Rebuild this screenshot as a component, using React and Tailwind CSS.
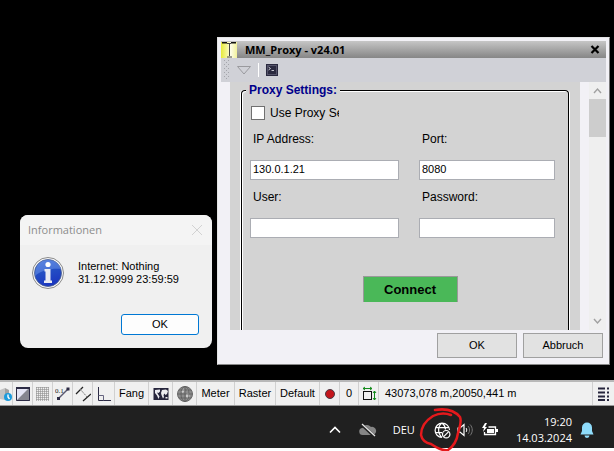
import React, { useState } from "react";

const InfoIcon = () => (
  <svg width="34" height="34" viewBox="0 0 34 34" className="shrink-0">
    <defs>
      <linearGradient id="infoBlue" x1="0" y1="0" x2="0.3" y2="1">
        <stop offset="0" stopColor="#4a76dc" />
        <stop offset="0.5" stopColor="#2450c4" />
        <stop offset="1" stopColor="#1c38c0" />
      </linearGradient>
    </defs>
    <circle cx="17" cy="17" r="15.500" fill="#f8f8f8" stroke="#8a8a8a" />
    <circle cx="17" cy="17" r="13.500" fill="url(#infoBlue)" stroke="#4a5f8f" strokeWidth="0.8" />
    <path d="M4 20C4 8 10 4 17 4s12 4 13 9C22 12 10 14 4 20Z" fill="#6f97ea" opacity="0.5" />
    <circle cx="17" cy="8.5" r="2.6" fill="#fff" />
    <path d="M13.500 13h6v11.500h1.500V27h-8v-2.500h1.500V15.500h-1Z" fill="#e9ebf2" />
  </svg>
);

const AppIcon = () => (
  <svg width="16" height="16" viewBox="0 0 16 16" className="shrink-0">
    <defs>
      <linearGradient id="appYellow" x1="0" x2="1">
        <stop offset="0" stopColor="#e6ea3a" />
        <stop offset="0.4" stopColor="#f6f7a0" />
        <stop offset="0.6" stopColor="#fdfdea" />
        <stop offset="1" stopColor="#f2f29a" />
      </linearGradient>
    </defs>
    <rect width="16" height="16" fill="url(#appYellow)" />
    <path d="M1 .8h5M10 .8h5" stroke="#111" strokeWidth="1.600" />
    <path d="M6 1.500h4M8.500 1v13M6 15h5" stroke="#444" fill="none" />
  </svg>
);

const StatusIcon = ({ children, size = 16 }) => (
  <svg width={size} height="16" viewBox={`0 0 ${size} 16`} fill="none">
    {children}
  </svg>
);

const PageIcon = () => (
  <StatusIcon size={12}>
    <path d="M0 4l5-2v12l-5-1Z" fill="#c4c4c4" />
    <path d="M5 2l4 2v9l-4 1Z" fill="#a2a2a2" />
    <circle cx="8" cy="11" r="4" fill="#1c9bdc" />
    <path d="M8 8.5V11l1.500 2" stroke="#fff" strokeWidth="1.400" />
  </StatusIcon>
);

const ContrastIcon = () => (
  <StatusIcon>
    <rect x="1.5" y="1.5" width="13" height="13" fill="#e4e4f4" />
    <path d="M15 1v14H1Z" fill="#85858f" />
    <path d="M1 2h14" stroke="#2c2b45" strokeWidth="2" />
    <path d="M1.500 1v13.500h13V1" stroke="#2c2b45" />
  </StatusIcon>
);

const GridIcon = () => (
  <StatusIcon>
    <path
      d="M1.5 1v14M3.5 1v14M5.5 1v14M7.500 1v14M9.500 1v14M11.500 1v14M13.500 1v14M1 1.5h13M1 3.500h13M1 5.500h13M1 7.500h13M1 9.500h13M1 11.500h13M1 13.500h13"
      stroke="#8f8f8f"
      strokeWidth="0.600"
    />
  </StatusIcon>
);

const SnapIcon = () => (
  <StatusIcon>
    <path d="M3 13L13 3" stroke="#5a5970" strokeWidth="1.4" />
    <path d="M2 11h3v3H2ZM11.500 1.500h3v3h-3Z" fill="#2c2b45" />
    <text x="0" y="7" fontSize="7" fill="#222" fontFamily="Liberation Serif">0.1</text>
  </StatusIcon>
);

const ParallelIcon = () => (
  <StatusIcon>
    <path d="M1 8l7-7M8 15l8-7" stroke="#222" strokeWidth="1.3" />
    <path d="M5 3l8 9" stroke="#777" strokeDasharray="2 1" />
  </StatusIcon>
);

const OrthoIcon = () => (
  <StatusIcon>
    <path d="M2.5 1v13.500H15" stroke="#2c2b45" />
    <path d="M2.500 9.500h5v5" stroke="#666580" />
  </StatusIcon>
);

const MapIcon = () => (
  <StatusIcon>
    <rect x="0.5" y="2" width="15" height="12" fill="#26253c" />
    <path d="M2 4l5-.5v2L5.500 7 4 6.500 5.500 9l1 1.500L5.500 13 4 9.500 2 7ZM9 4l4-.5 2 1.500-1 3-1.500 1-1-1.500L10.500 9l.5 2-1 1.500L8.500 9 8 7ZM12.500 11h2v1.500h-2Z" fill="#ececf0" />
  </StatusIcon>
);

const EarthIcon = () => (
  <StatusIcon>
    <circle cx="8" cy="8" r="7.500" fill="#8c8c8c" stroke="#6a6a6a" />
    <path d="M4 4l3-1.500 1 2-2 2.500-2-1ZM9 8l3-1 1 3-2 3-2-2ZM10 3l2 1-1 1.500Z" fill="#c9c9c9" />
    <path d="M.5 8h15M8 .5v15M2 4h12M2 12h12" stroke="#5c5c5c" strokeWidth="0.8" />
    <ellipse cx="8" cy="8" rx="4" ry="7.500" stroke="#5c5c5c" strokeWidth="0.8" />
  </StatusIcon>
);

const RecordIcon = () => (
  <StatusIcon size={12}>
    <circle cx="6" cy="8" r="4.500" fill="#c4161c" stroke="#4b3a45" />
  </StatusIcon>
);

const ExtentIcon = () => (
  <StatusIcon>
    <rect x="2.500" y="5.500" width="8" height="8" stroke="#111" />
    <path d="M2 2.500h9M4 1L2 2.500 4 4M9 1l2 1.500L9 4M13.500 5v9M12 7l1.500-2L15 7M12 12l1.500 2 1.500-2" stroke="#138a1b" />
  </StatusIcon>
);

const MenuIcon = () => (
  <StatusIcon size={12}>
    <path d="M0 2.500h7M0 6.500h7M0 10.500h7M0 14h7M9 2.500h2M9 6.500h2M9 10.500h2M9 14h2" stroke="#26253c" strokeWidth="2" />
  </StatusIcon>
);

const Chevron = ({ up }) => (
  <svg width="9" height="9" viewBox="0 0 9 9" fill="none">
    <path d={up ? "M1 7L4.500 3 8 7" : "M1 2L4.500 6 8 2"} stroke="#a0a0a0" strokeWidth="1.400" />
  </svg>
);

const statusItems = [
  { name: "Layer", content: <PageIcon />, width: "w-[13px]" },
  { name: "Kontrast", content: <ContrastIcon />, width: "w-5" },
  { name: "Gitter", content: <GridIcon />, width: "w-5" },
  { name: "Genauigkeit", content: <SnapIcon />, width: "w-5" },
  { name: "Parallel", content: <ParallelIcon />, width: "w-5" },
  { name: "Ortho", content: <OrthoIcon />, width: "w-[22px]" },
  { content: "Fang", width: "w-[34px]" },
  { name: "Karte", content: <MapIcon />, width: "w-6" },
  { name: "Globus", content: <EarthIcon />, width: "w-6" },
  { content: "Meter", width: "w-[38px]" },
  { content: "Raster", width: "w-[41px]" },
  { content: "Default", width: "w-11" },
  { name: "Aufnahme", content: <RecordIcon />, width: "w-5" },
  { content: "0", width: "w-[19px]" },
  { name: "Ausdehnung", content: <ExtentIcon />, width: "w-5" },
];

const Field = ({ id, label, value, onChange, type = "text" }) => (
  <div className="flex flex-col">
    <label htmlFor={id} className="pl-[3px] leading-4">
      {label}
    </label>
    <input
      id={id}
      type={type}
      value={value}
      onChange={(e) => onChange(id, e.target.value)}
      className="mt-[13px] h-5 w-full border border-[#abadb3] bg-white px-[2px] pb-[2px] text-[11px] outline-none"
    />
  </div>
);

const ProxyWindow = () => {
  const [settings, setSettings] = useState({
    ip: "130.0.1.21",
    port: "8080",
    user: "",
    password: "",
  });
  const [useProxy, setUseProxy] = useState(false);

  const handleChange = (key, value) => {
    setSettings((prev) => ({ ...prev, [key]: value }));
  };

  return (
    <section className="absolute top-[37px] left-[217px] w-[393px] border border-t-[#e4e4e4] border-r-[#777] border-b-[#888] border-l-[#e4e4e4] bg-[#f2f1f6] p-[3px] text-xs text-black">
      <header className="flex h-[17px] items-center bg-linear-to-b from-[#c6c6c6] to-[#868686]">
        <AppIcon />
        <h1 className="ml-2 flex-1 font-['Open_Sans',sans-serif] text-[11px] leading-4 font-bold">MM_Proxy - v24.01</h1>
        <button aria-label="Schließen" className="mr-[6px]">
          <svg width="10" height="9" viewBox="0 0 10 9">
            <path d="M1.500 1l7 7M8.500 1l-7 7" stroke="#000" strokeWidth="2.200" />
          </svg>
        </button>
      </header>

      <div className="flex h-6 items-center bg-[#d0d1d7]">
        <svg width="12" height="24" viewBox="0 0 12 24" className="shrink-0">
          <path d="M3.500 2v19M7.500 2v19" stroke="#a4a5ab" strokeDasharray="1 3" />
          <path d="M5.500 4v18" stroke="#a4a5ab" strokeDasharray="1 3" />
        </svg>
        <button aria-label="Filter" className="ml-1">
          <svg width="14" height="9" viewBox="0 0 14 9">
            <path d="M.5.5h13L7 8Z" fill="none" stroke="#9a9a9e" />
          </svg>
        </button>
        <span className="ml-[7px] h-[14px] w-px bg-white" />
        <button aria-label="Konsole" className="ml-[7px]">
          <svg width="12" height="12" viewBox="0 0 12 12">
            <rect width="12" height="12" fill="#2b2a40" />
            <rect x="1.500" y="1.500" width="9" height="9" fill="none" stroke="#55546a" />
            <path d="M2.500 3l2 1.500-2 1.500M5.500 6.500h2.500" fill="none" stroke="#d8d8e0" strokeWidth="0.900" />
          </svg>
        </button>
      </div>

      <div className="flex">
        <div className="ml-[9px] min-w-0 flex-1 bg-[#d3d3d3] px-[11px]">
          <fieldset className="rounded-t border border-b-0 border-black px-2 pb-7 shadow-[-1px_0_0_#fff,inset_1px_1px_0_#fff,inset_-1px_0_0_#d3d3d3,1px_0_0_#fff]">
            <legend className="-ml-1 bg-[#d3d3d3] px-[3px] leading-4 font-bold text-[#00008b]">Proxy Settings:</legend>
            <label className="mt-[7px] ml-px flex h-4 w-[88px] items-center gap-[5px] overflow-hidden whitespace-nowrap">
              <input
                type="checkbox"
                checked={useProxy}
                onChange={(e) => setUseProxy(e.target.checked)}
                className="size-[14px] shrink-0 appearance-none border border-[#707070] bg-white checked:bg-[#0078d4]"
              />
              Use Proxy Se
            </label>
            <div className="mt-[10px] grid grid-cols-[149fr_136fr] gap-x-5 gap-y-[9px] pr-[5px]">
              <Field id="ip" label="IP Address:" value={settings.ip} onChange={handleChange} />
              <Field id="port" label="Port:" value={settings.port} onChange={handleChange} />
              <Field id="user" label="User:" value={settings.user} onChange={handleChange} />
              <Field id="password" label="Password:" type="password" value={settings.password} onChange={handleChange} />
            </div>
            <div className="mt-[38px] flex justify-center pl-[10px]">
              <button className="h-[26px] w-[95px] border border-b-0 border-[#999] bg-[#4ab858] text-[13px] font-bold">
                Connect
              </button>
            </div>
          </fieldset>
        </div>
        <div className="ml-[9px] flex w-[17px] flex-col items-center bg-[#efefef]">
          <button aria-label="Nach oben" className="flex h-[17px] items-center justify-center">
            <Chevron up />
          </button>
          <div className="h-[38px] w-full bg-[#cdcdcd]" />
          <button aria-label="Nach unten" className="mt-auto flex h-[17px] items-center justify-center">
            <Chevron />
          </button>
        </div>
      </div>

      <footer className="flex justify-end gap-[6px] px-[3px] pt-[3px] pb-[3px] text-[11px]">
        <button className="h-[25px] w-20 border border-[#a0a0a0] bg-[#e2e2e2]">OK</button>
        <button className="h-[25px] w-20 border border-[#a0a0a0] bg-[#e2e2e2]">Abbruch</button>
      </footer>
    </section>
  );
};

const InfoDialog = () => (
  <section
    role="dialog"
    aria-labelledby="info-title"
    className="absolute top-[215px] left-5 w-48 overflow-hidden rounded-lg bg-[#f0f0f0] text-[11px] text-black"
  >
    <header className="flex h-[30px] items-center justify-between bg-[#f4f4f4] pr-[10px] pl-2">
      <h2 id="info-title" className="font-['Open_Sans',sans-serif] text-[11px] text-[#8c8c8c]">
        Informationen
      </h2>
      <button aria-label="Schließen">
        <svg width="10" height="10" viewBox="0 0 10 10">
          <path d="M0 0l10 10M10 0L0 10" stroke="#d2d2d2" />
        </svg>
      </button>
    </header>
    <div className="flex items-center gap-[13px] px-[11px] pt-[11px]">
      <InfoIcon />
      <p className="leading-[13px]">
        Internet: Nothing
        <br />
        31.12.9999 23:59:59
      </p>
    </div>
    <div className="flex justify-end px-[13px] pt-6 pb-[13px]">
      <button className="h-[21px] w-[78px] rounded-[3px] border border-[#0078d4] bg-[#fdfdfd]">OK</button>
    </div>
  </section>
);

const StatusBar = () => (
  <div className="flex h-[26px] items-stretch border-t-2 border-b border-t-[#b8b8b8] border-b-[#999] bg-[#f0f0f0] text-[11px] text-black">
    {statusItems.map((item, index) => (
      <button
        key={index}
        aria-label={item.name}
        className={`flex shrink-0 items-center justify-center border-r border-[#d0d0d0] ${item.width}`}
      >
        {item.content}
      </button>
    ))}
    <span className="flex flex-1 items-center border-r border-[#d0d0d0] pl-[6px] whitespace-nowrap">
      43073,078 m,20050,441 m
    </span>
    <button aria-label="Menü" className="flex w-[21px] items-center justify-center">
      <MenuIcon />
    </button>
  </div>
);

const Taskbar = () => (
  <div className="flex h-[42px] items-center justify-end bg-[#202020] pt-[6px] pr-5 font-['Open_Sans',sans-serif] text-[11px] text-white">
    <button aria-label="Ausgeblendete Symbole">
      <svg width="12" height="8" viewBox="0 0 12 8" fill="none">
        <path d="M1 6.500l5-5 5 5" stroke="#fff" strokeWidth="1.600" />
      </svg>
    </button>
    <button aria-label="OneDrive" className="ml-[18px]">
      <svg width="18" height="14" viewBox="0 0 18 14">
        <path d="M4 12a3.500 3.500 0 01-.5-7A5 5 0 0112 4a4 4 0 012 8Z" fill="#858585" />
        <path d="M2 1l13 12" stroke="#202020" strokeWidth="3" />
        <path d="M3 1l13 12" stroke="#e8e8e8" strokeWidth="1.300" />
      </svg>
    </button>
    <button className="ml-4">DEU</button>
    <button aria-label="Netzwerk" className="relative ml-[19px]">
      <svg width="17" height="17" viewBox="0 0 17 17" fill="none" stroke="#fff" strokeWidth="1.200">
        <path d="M8 15.500A7.200 7.200 0 1115.500 8M1.500 5.700h13M1.500 10.700H8M8 15.500C3.500 11.500 3.500 4.500 8 1c2.300 1.800 3.500 4 3.500 6.500" />
        <circle cx="12.200" cy="12.200" r="3.700" />
        <path d="M9.700 14.700l5-5" />
      </svg>
      <svg width="46" height="46" viewBox="0 0 46 46" fill="none" className="pointer-events-none absolute -top-[15px] -left-[15px]">
        <path
          d="M32 8C27 6 20 6 14 9 6 14 2 20 2 28c1 5 5 8 10 9 6 4 11 7 17 6 6-4 9-10 10-17 2-7 4-11 2-16C36 4 28 1 16 3"
          stroke="#e5191c"
          strokeWidth="2.500"
          strokeLinecap="round"
        />
      </svg>
    </button>
    <button aria-label="Lautstärke" className="ml-[6px]">
      <svg width="16" height="14" viewBox="0 0 16 14" fill="none" stroke="#fff">
        <path d="M1 5h2l4-3.500v11L3 9H1Z" strokeWidth="1.200" />
        <path d="M9 5c1 1 1 3 0 4" />
        <path d="M11 3c2 2 2 6 0 8M13 1.500c3 3 3 8 0 11" stroke="#777" />
      </svg>
    </button>
    <button aria-label="Akku" className="ml-2">
      <svg width="18" height="14" viewBox="0 0 18 14" fill="none">
        <path d="M7.500 4h7v7.500h-11V9" stroke="#fff" strokeWidth="1.300" />
        <path d="M6 9V6h7v4H6ZM15 6h2v3h-2ZM4 0L1 5h2L2 9l4-5H4l2-4Z" fill="#fff" />
      </svg>
    </button>
    <div className="ml-[17px] text-right leading-4">
      <div>19:20</div>
      <div>14.03.2024</div>
    </div>
    <button aria-label="Benachrichtigungen" className="ml-2">
      <svg width="14" height="16" viewBox="0 0 14 16" fill="#8fdcfb">
        <path d="M7 .5a5 5 0 015 5V9l1.500 3.500H.5L2 9V5.500a5 5 0 015-5ZM4.500 13.500h5a2.500 2.500 0 01-5 0Z" />
      </svg>
    </button>
  </div>
);

const App = () => {
  return (
    <div className="flex min-h-screen flex-col bg-white pb-[3px] font-['Liberation_Sans',Arial,sans-serif]">
      <main className="relative min-h-[380px] flex-1 bg-black">
        <InfoDialog />
        <ProxyWindow />
      </main>
      <StatusBar />
      <Taskbar />
    </div>
  );
};

export default App;
